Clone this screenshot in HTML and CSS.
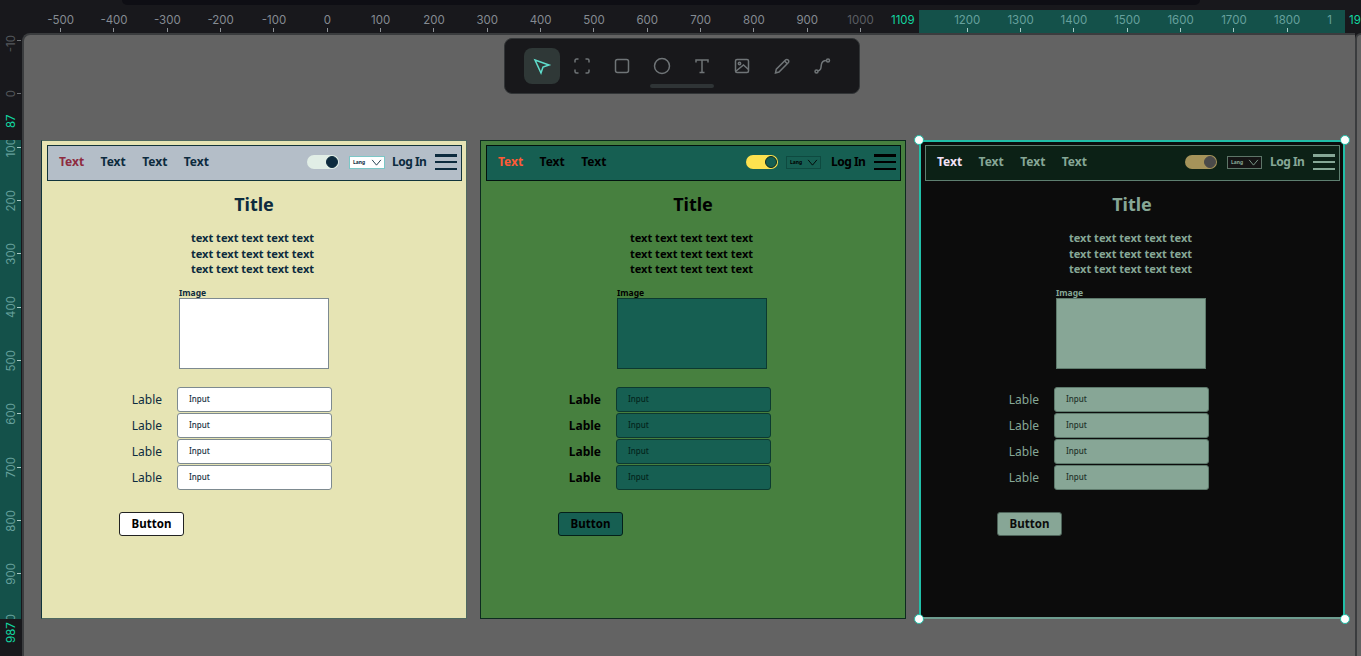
FILE: index.html
```html
<!DOCTYPE html>
<html lang="en">
<head>
  <meta charset="UTF-8">
  <title>Theme frames</title>
  <meta name="viewport" content="width=device-width, initial-scale=1.0" />
  <link rel="stylesheet" href="styles.css">
</head>
<body>
  <div class="topstrip"></div>

  <div class="hruler">
    <div class="hband"></div>
    <div class="hcells">
      <div class="hcell"><span>-500</span></div>
      <div class="hcell"><span>-400</span></div>
      <div class="hcell"><span>-300</span></div>
      <div class="hcell"><span>-200</span></div>
      <div class="hcell"><span>-100</span></div>
      <div class="hcell"><span>0</span></div>
      <div class="hcell"><span>100</span></div>
      <div class="hcell"><span>200</span></div>
      <div class="hcell"><span>300</span></div>
      <div class="hcell"><span>400</span></div>
      <div class="hcell"><span>500</span></div>
      <div class="hcell"><span>600</span></div>
      <div class="hcell"><span>700</span></div>
      <div class="hcell"><span>800</span></div>
      <div class="hcell"><span>900</span></div>
      <div class="hcell dim"><span>1000</span></div>
      <div class="hcell blank"></div>
      <div class="hcell on"><span>1200</span></div>
      <div class="hcell on"><span>1300</span></div>
      <div class="hcell on"><span>1400</span></div>
      <div class="hcell on"><span>1500</span></div>
      <div class="hcell on"><span>1600</span></div>
      <div class="hcell on"><span>1700</span></div>
      <div class="hcell on"><span>1800</span></div>
      <div class="hcell on cut"><span>1</span></div>
    </div>
    <span class="hmark hmark-start">1109</span>
    <span class="hmark hmark-end">19</span>
  </div>

  <div class="vruler">
    <div class="vband"></div>
    <div class="vcells">
      <div class="vcell dim first"><span>-10</span></div>
      <div class="vcell dim"><span>0</span></div>
      <div class="vcell on"><span>100</span></div>
      <div class="vcell on"><span>200</span></div>
      <div class="vcell on"><span>300</span></div>
      <div class="vcell on"><span>400</span></div>
      <div class="vcell on"><span>500</span></div>
      <div class="vcell on"><span>600</span></div>
      <div class="vcell on"><span>700</span></div>
      <div class="vcell on"><span>800</span></div>
      <div class="vcell on"><span>900</span></div>
      <div class="vcell on"><span>1000</span></div>
    </div>
    <span class="vmark vmark-start">87</span>
    <span class="vmark vmark-end">987</span>
  </div>

  <main class="canvas">
    <div class="toolbar">
      <button class="tool tool-active" type="button">
        <svg viewBox="0 0 20 20"><path d="M3 4l14 5-6 2-2 6z"/></svg>
      </button>
      <button class="tool" type="button">
        <svg viewBox="0 0 20 20"><path d="M3 6.500V4.500a1.500 1.500 0 0 1 1.500-1.500h2M13.500 3h2a1.500 1.500 0 0 1 1.500 1.500v2M17 13.500v2a1.500 1.500 0 0 1-1.500 1.500h-2M6.500 17h-2a1.500 1.500 0 0 1-1.500-1.500v-2"/></svg>
      </button>
      <button class="tool" type="button">
        <svg viewBox="0 0 20 20"><rect x="3.5" y="3.5" width="13" height="13" rx="2"/></svg>
      </button>
      <button class="tool" type="button">
        <svg viewBox="0 0 20 20"><circle cx="10" cy="10" r="7.5"/></svg>
      </button>
      <button class="tool" type="button">
        <svg viewBox="0 0 20 20"><path d="M4 6.500V4h12v2.500M10 4v12.500M7.500 16.500h5"/></svg>
      </button>
      <button class="tool" type="button">
        <svg viewBox="0 0 20 20"><rect x="3.5" y="3.5" width="13" height="13" rx="1.5"/><circle cx="7.500" cy="7.500" r="1.200"/><path d="M3.500 15.500l8-6.500 5 4.500"/></svg>
      </button>
      <button class="tool" type="button">
        <svg viewBox="0 0 20 20"><path d="M3.500 17l.8-3.800L13.500 4a1.800 1.800 0 0 1 2.600 0l.1.1a1.800 1.800 0 0 1 0 2.600L7 16z"/><path d="M12.500 5l2.800 2.800"/></svg>
      </button>
      <button class="tool" type="button">
        <svg viewBox="0 0 20 20"><circle cx="4.500" cy="15.500" r="1.500"/><circle cx="16" cy="4.500" r="1.500"/><path d="M5.500 15c3.500-.5 3.500-3 3.800-6s2-4.500 5.200-4.500"/></svg>
      </button>
      <div class="toolbar-handle"></div>
    </div>

    <section class="board board-light">
      <nav class="nav">
        <a class="nav-link nav-active">Text</a>
        <a class="nav-link">Text</a>
        <a class="nav-link">Text</a>
        <a class="nav-link">Text</a>
        <div class="nav-right">
          <div class="toggle"><div class="knob"></div></div>
          <div class="lang"><span>Lang</span><svg viewBox="0 0 12 8"><path d="M1 1l5 6 5-6"/></svg></div>
          <a class="login">Log In</a>
          <div class="burger"><i></i><i></i><i></i></div>
        </div>
      </nav>
      <div class="content">
        <h1 class="title">Title</h1>
        <p class="copy">text text text text text<br>text text text text text<br>text text text text text</p>
        <div class="image-block">
          <div class="image-label">Image</div>
          <div class="image-box"></div>
        </div>
        <div class="fields">
          <label class="field-label">Lable</label><div class="field-input">Input</div>
          <label class="field-label">Lable</label><div class="field-input">Input</div>
          <label class="field-label">Lable</label><div class="field-input">Input</div>
          <label class="field-label">Lable</label><div class="field-input">Input</div>
        </div>
        <button class="btn" type="button">Button</button>
      </div>
    </section>

    <section class="board board-green">
      <nav class="nav">
        <a class="nav-link nav-active">Text</a>
        <a class="nav-link">Text</a>
        <a class="nav-link">Text</a>
        <div class="nav-right">
          <div class="toggle"><div class="knob"></div></div>
          <div class="lang"><span>Lang</span><svg viewBox="0 0 12 8"><path d="M1 1l5 6 5-6"/></svg></div>
          <a class="login">Log In</a>
          <div class="burger"><i></i><i></i><i></i></div>
        </div>
      </nav>
      <div class="content">
        <h1 class="title">Title</h1>
        <p class="copy">text text text text text<br>text text text text text<br>text text text text text</p>
        <div class="image-block">
          <div class="image-label">Image</div>
          <div class="image-box"></div>
        </div>
        <div class="fields">
          <label class="field-label">Lable</label><div class="field-input">Input</div>
          <label class="field-label">Lable</label><div class="field-input">Input</div>
          <label class="field-label">Lable</label><div class="field-input">Input</div>
          <label class="field-label">Lable</label><div class="field-input">Input</div>
        </div>
        <button class="btn" type="button">Button</button>
      </div>
    </section>

    <section class="board board-dark">
      <nav class="nav">
        <a class="nav-link nav-active">Text</a>
        <a class="nav-link">Text</a>
        <a class="nav-link">Text</a>
        <a class="nav-link">Text</a>
        <div class="nav-right">
          <div class="toggle"><div class="knob"></div></div>
          <div class="lang"><span>Lang</span><svg viewBox="0 0 12 8"><path d="M1 1l5 6 5-6"/></svg></div>
          <a class="login">Log In</a>
          <div class="burger"><i></i><i></i><i></i></div>
        </div>
      </nav>
      <div class="content">
        <h1 class="title">Title</h1>
        <p class="copy">text text text text text<br>text text text text text<br>text text text text text</p>
        <div class="image-block">
          <div class="image-label">Image</div>
          <div class="image-box"></div>
        </div>
        <div class="fields">
          <label class="field-label">Lable</label><div class="field-input">Input</div>
          <label class="field-label">Lable</label><div class="field-input">Input</div>
          <label class="field-label">Lable</label><div class="field-input">Input</div>
          <label class="field-label">Lable</label><div class="field-input">Input</div>
        </div>
        <button class="btn" type="button">Button</button>
      </div>
      <span class="handle handle-tl"></span>
      <span class="handle handle-tr"></span>
      <span class="handle handle-bl"></span>
      <span class="handle handle-br"></span>
    </section>
  </main>

  <div class="sidepanel"></div>
</body>
</html>
```

FILE: styles.css
```css
* {
    box-sizing: border-box;
}

html, body {
    height: 100%;
}

body {
    margin: 0;
    overflow: hidden;
    background: #18181c;
    position: relative;
    display: grid;
    grid-template-columns: 22px 1333px 6px;
    grid-template-rows: 33px 623px;
    font-family: "Noto Sans", "Open Sans", sans-serif;
}

/* top strip */
.topstrip {
    position: absolute;
    left: 122px;
    top: 0;
    width: 1078px;
    height: 5px;
    background: #0e0e14;
    border-radius: 0 0 8px 8px;
    z-index: 3;
}

/* rulers */
.hruler {
    grid-column: 1 / 4;
    grid-row: 1;
    position: relative;
    overflow: hidden;
    font-family: Inter, sans-serif;
    font-size: 11.5px;
    color: #858b92;
}

.hband {
    position: absolute;
    left: 919px;
    top: 10px;
    width: 426px;
    height: 23px;
    background: #14514a;
}

.hcells {
    position: absolute;
    left: 34px;
    top: 13px;
    height: 20px;
    display: flex;
}

.hcell {
    width: 53.33px;
    flex: none;
    display: flex;
    flex-direction: column;
    align-items: center;
    justify-content: space-between;
    line-height: 14px;
}

.hcell::after {
    content: "";
    width: 1px;
    height: 4px;
    margin-bottom: 1px;
    background: #8d9196;
}

.hcell.blank::after,
.hcell.cut::after {
    visibility: hidden;
}

.hcell.cut span {
    margin-right: 22px;
}

.hcell.dim {
    color: #5b5e63;
}

.hcell.on {
    color: #66a09c;
}

.hcell.on::after {
    background: #a9c9c5;
}

.hmark {
    position: absolute;
    top: 10px;
    height: 23px;
    line-height: 20px;
    color: #12d6a0;
    background: #18181c;
}

.hmark-start {
    left: 884px;
    width: 35px;
    padding-left: 7px;
}

.hmark-end {
    left: 1345px;
    width: 16px;
    padding-left: 4px;
}

.vruler {
    grid-column: 1;
    grid-row: 2;
    position: relative;
    overflow: hidden;
    font-family: Inter, sans-serif;
    font-size: 11.5px;
    color: #66a09c;
}

.vband {
    position: absolute;
    left: 0;
    top: 107px;
    width: 21px;
    height: 479px;
    background: #14514a;
}

.vcells {
    position: absolute;
    left: 0;
    top: -19px;
    width: 21px;
    display: flex;
    flex-direction: column;
}

.vcell {
    height: 53.33px;
    flex: none;
    display: flex;
    align-items: center;
    justify-content: space-between;
    padding: 0 0 0 5px;
}

.vcell span {
    writing-mode: vertical-rl;
    transform: rotate(180deg);
    line-height: 12px;
}

.vcell.first span {
    transform: translateY(3px) rotate(180deg);
}

.vcell::after {
    content: "";
    width: 4px;
    height: 1px;
    background: #a9c9c5;
}

.vcell.dim {
    color: #55585c;
}

.vcell.dim::after {
    background: #6b6e72;
}

.vmark {
    position: absolute;
    left: 0;
    width: 21px;
    padding-right: 5px;
    background: #18181c;
    color: #12d6a0;
    line-height: 12px;
    writing-mode: vertical-rl;
    transform: rotate(180deg);
    text-align: left;
}

.vmark-start {
    top: 77px;
    height: 30px;
    padding-top: 12px;
}

.vmark-end {
    top: 586px;
    height: 37px;
    padding-top: 13px;
}

/* canvas */
.canvas {
    grid-column: 2;
    grid-row: 2;
    position: relative;
    display: flex;
    gap: 13px;
    padding: 105px 0 0 17px;
    background: #636363;
    border: 2px solid #3a3c3e;
    border-right: 0;
    border-bottom: 0;
    border-top-left-radius: 8px;
    overflow: hidden;
}

.sidepanel {
    grid-column: 3;
    grid-row: 2;
    background: #636363;
    border-left: 2px solid #3a3c3e;
    border-top: 2px solid #3a3c3e;
    border-top-left-radius: 6px;
}

/* toolbar */
.toolbar {
    position: absolute;
    left: 480px;
    top: 3px;
    width: 356px;
    height: 56px;
    padding: 9px 0 0 19px;
    display: flex;
    background: #18181b;
    border: 1px solid #323537;
    border-radius: 8px;
    z-index: 2;
}

.tool {
    width: 36px;
    height: 36px;
    margin-right: 4px;
    padding: 8px;
    flex: none;
    background: none;
    border: 0;
    border-radius: 8px;
}

.tool svg {
    display: block;
    width: 20px;
    height: 20px;
    fill: none;
    stroke: #6f7477;
    stroke-width: 1.5;
}

.tool-active {
    background: #2f3837;
}

.tool-active svg {
    stroke: #5fdccb;
}

.toolbar-handle {
    position: absolute;
    left: 145px;
    top: 45px;
    width: 64px;
    height: 4px;
    border-radius: 2px;
    background: #2f3436;
}

/* frames */
.board {
    --bg: #e6e4b4;
    --edge: #12343b;
    --edge-soft: #4f6860;
    --nav-bg: #b4bec8;
    --nav-edge: #12343b;
    --ink: #0d2b3e;
    --active: #8e2b3f;
    --track: #e1eee6;
    --knob: #0d2b3e;
    --knob-edge: #0d2b3e;
    --lang-bg: #ffffff;
    --lang-edge: #7cc7c7;
    --field-bg: #ffffff;
    --field-edge: #7d8a90;
    --hint: #17303f;
    --btn-ink: #000000;
    --btn-edge: #222222;
    --label-weight: 400;
    position: relative;
    width: 426px;
    height: 479px;
    flex: none;
    background: var(--bg);
    border: 1px solid var(--edge-soft);
    border-left-color: var(--edge);
    color: var(--ink);
}

.board-green {
    --bg: #47803f;
    --edge: #0d2a1f;
    --edge-soft: #0d2a1f;
    --nav-bg: #165f52;
    --nav-edge: #02120f;
    --ink: #000000;
    --active: #ff5a36;
    --track: #fde24f;
    --knob: #165f52;
    --knob-edge: #0d2a1f;
    --lang-bg: #165f52;
    --lang-edge: #0e4a40;
    --field-bg: #165f52;
    --field-edge: #0c3a30;
    --hint: #03241c;
    --btn-ink: #000000;
    --btn-edge: #04201a;
    --label-weight: 700;
}

.board-dark {
    --bg: #0c0c0c;
    --edge: #21bfa8;
    --edge-soft: #21bfa8;
    --nav-bg: #0c2116;
    --nav-edge: #5e7f70;
    --ink: #86a796;
    --active: #f3e2f7;
    --track: #a5935a;
    --knob: #4a4a4a;
    --knob-edge: #4a4a4a;
    --lang-bg: #141414;
    --lang-edge: #5d7568;
    --field-bg: #87a696;
    --field-edge: #5e7a6c;
    --hint: #22332b;
    --btn-ink: #0c0c0c;
    --btn-edge: #4d6359;
    border-width: 2px;
    border-bottom-color: #6e9d90;
}

.nav {
    height: 36px;
    margin: 4px 4px 0 5px;
    padding: 0 0 2px 11px;
    display: flex;
    align-items: center;
    gap: 17px;
    background: var(--nav-bg);
    border: 1px solid var(--nav-edge);
    font-size: 12px;
    font-weight: 700;
}

.board-dark .nav {
    margin: 3px 3px 0 4px;
}

.nav-link {
    width: 24.6px;
    margin-bottom: 2px;
    white-space: nowrap;
}

.nav-active {
    color: var(--active);
}

.nav-right {
    margin-left: auto;
    padding-right: 4px;
    display: flex;
    align-items: center;
}

.toggle {
    width: 32px;
    height: 14px;
    padding: 1px;
    display: flex;
    justify-content: flex-end;
    background: var(--track);
    border-radius: 7px;
}

.knob {
    width: 12px;
    height: 12px;
    background: var(--knob);
    border: 1px solid var(--knob-edge);
    border-radius: 50%;
}

.lang {
    width: 36px;
    height: 13px;
    margin-left: 10px;
    padding: 0 2px 0 3px;
    display: flex;
    align-items: center;
    justify-content: space-between;
    background: var(--lang-bg);
    border: 1px solid var(--lang-edge);
    font-size: 5px;
    line-height: 10px;
}

.board-green .lang {
    width: 35px;
    margin-left: 8px;
}

.board-dark .lang {
    width: 35px;
}

.lang svg {
    width: 11px;
    height: 7px;
    fill: none;
    stroke: var(--ink);
    stroke-width: 1;
}

.login {
    width: 34px;
    margin: 0 0 2px 7px;
    font-size: 12px;
    letter-spacing: -0.5px;
    white-space: nowrap;
}

.board-green .login {
    margin-left: 10px;
}

.board-dark .login {
    margin-left: 8px;
}

.burger {
    width: 22px;
    height: 16px;
    margin-left: 9px;
    display: flex;
    flex-direction: column;
    justify-content: space-between;
}

.burger i {
    display: block;
    height: 2.5px;
    background: var(--ink);
}

.content {
    display: flex;
    flex-direction: column;
    align-items: center;
}

.title {
    margin: 11px 0 0;
    font-size: 18px;
    line-height: 25px;
    font-weight: 700;
}

.copy {
    margin: 13px 0 0;
    padding-right: 3px;
    font-size: 11.05px;
    line-height: 15.5px;
    font-weight: 700;
    text-align: center;
}

.image-block {
    width: 150px;
    margin-top: 10px;
}

.board-green .image-block,
.board-dark .image-block {
    margin-left: -2px;
}

.image-label {
    font-size: 8.5px;
    line-height: 11px;
    font-weight: 700;
}

.image-box {
    height: 71px;
    background: var(--field-bg);
    border: 1px solid var(--field-edge);
}

.fields {
    width: 100%;
    margin-top: 18px;
    padding-left: 1px;
    display: grid;
    grid-template-columns: 1fr 155px 1fr;
    column-gap: 15px;
    row-gap: 1px;
}

.board-dark .fields {
    padding-left: 0;
    padding-right: 1px;
}

.field-label {
    grid-column: 1;
    justify-self: end;
    align-self: center;
    font-size: 12px;
    font-weight: var(--label-weight);
}

.field-input {
    grid-column: 2;
    height: 25px;
    padding-left: 11px;
    background: var(--field-bg);
    border: 1px solid var(--field-edge);
    border-radius: 3px;
    color: var(--hint);
    font-size: 8px;
    font-weight: 500;
    line-height: 22px;
}

.btn {
    align-self: flex-start;
    width: 65px;
    height: 24px;
    margin: 22px 0 0 77px;
    padding: 0;
    background: var(--field-bg);
    border: 1px solid var(--btn-edge);
    border-radius: 3px;
    color: var(--btn-ink);
    font-family: "Noto Sans", "Open Sans", sans-serif;
    font-size: 11.5px;
    font-weight: 700;
}

.board-dark .btn {
    margin-left: 76px;
}

/* selection handles */
.handle {
    position: absolute;
    width: 10px;
    height: 10px;
    background: #ffffff;
    border: 1px solid #21bfa8;
    border-radius: 50%;
}

.handle-tl {
    left: -7px;
    top: -7px;
}

.handle-tr {
    right: -7px;
    top: -7px;
}

.handle-bl {
    left: -7px;
    bottom: -7px;
}

.handle-br {
    right: -7px;
    bottom: -7px;
}
```
